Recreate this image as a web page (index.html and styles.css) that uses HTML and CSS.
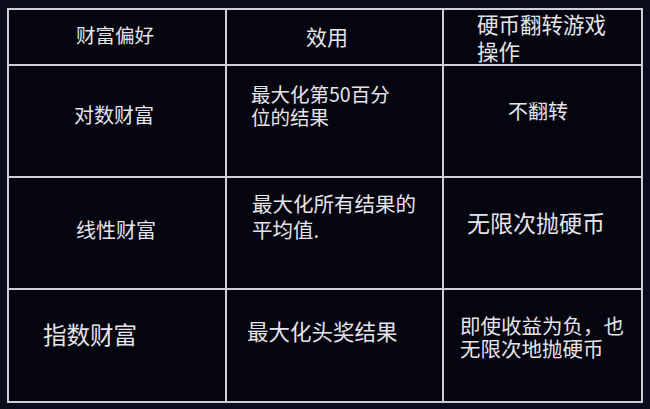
FILE: index.html
```html
<!DOCTYPE html>
<html lang="zh-CN">
<head>
<meta charset="utf-8">
<title>财富偏好</title>
<link rel="stylesheet" href="styles.css">
</head>
<body>
<div class="table">
  <div class="cell r1c1"><span class="ln">财富偏好</span></div>
  <div class="cell r1c2"><span class="ln">效用</span></div>
  <div class="cell r1c3"><span class="ln">硬币翻转游戏</span><span class="ln">操作</span></div>

  <div class="cell r2c1"><span class="ln">对数财富</span></div>
  <div class="cell r2c2"><span class="ln">最大化第50百分</span><span class="ln">位的结果</span></div>
  <div class="cell r2c3"><span class="ln">不翻转</span></div>

  <div class="cell r3c1"><span class="ln">线性财富</span></div>
  <div class="cell r3c2"><span class="ln">最大化所有结果的</span><span class="ln">平均值.</span></div>
  <div class="cell r3c3"><span class="ln">无限次抛硬币</span></div>

  <div class="cell r4c1"><span class="ln">指数财富</span></div>
  <div class="cell r4c2"><span class="ln">最大化头奖结果</span></div>
  <div class="cell r4c3"><span class="ln">即使收益为负，也</span><span class="ln">无限次地抛硬币</span></div>
</div>
</body>
</html>
```

FILE: styles.css
```css
html, body {
  margin: 0;
  padding: 0;
  background: #0b0d1d;
}
body {
  width: 650px;
  height: 409px;
  overflow: hidden;
  font-family: "Noto Sans CJK SC", "Noto Sans", sans-serif;
  color: #e4e4ea;
}
.table {
  box-sizing: border-box;
  margin: 8px 0 0 7px;
  width: 636px;
  display: grid;
  grid-template-columns: 218px 217px 199px;
  grid-template-rows: 56px 112px 112px 113px;
  border-top: 2px solid #cdced6;
  border-left: 2px solid #cdced6;
  background: #04050e;
}
.cell {
  box-sizing: border-box;
  border-right: 2px solid #cdced6;
  border-bottom: 2px solid #cdced6;
  white-space: nowrap;
  display: flex;
  flex-direction: column;
  align-items: flex-start;
}
.ln {
  display: block;
}
.r1c1 { font-size: 19.5px; line-height: 25px; padding: 12px 0 0 67px; }
.r1c2 { font-size: 21px; line-height: 27px; padding: 13px 0 0 79px; }
.r1c3 { font-size: 21.5px; line-height: 27px; padding: 0 0 0 33px; }

.r2c1 { font-size: 20px; line-height: 26px; padding: 36px 0 0 65px; }
.r2c2 { font-size: 19.5px; line-height: 23px; padding: 16px 0 0 24px; }
.r2c3 { font-size: 20px; line-height: 26px; padding: 32px 0 0 64px; }

.r3c1 { font-size: 20px; line-height: 26px; padding: 39px 0 0 67px; }
.r3c2 { font-size: 20.5px; line-height: 26px; padding: 12px 0 0 25px; }
.r3c3 { font-size: 23px; line-height: 30px; padding: 29px 0 0 23px; }

.r4c1 { font-size: 23.5px; line-height: 30px; padding: 29px 0 0 34px; }
.r4c2 { font-size: 21.5px; line-height: 28px; padding: 27px 0 0 20px; }
.r4c3 { font-size: 20.5px; line-height: 23px; padding: 24px 0 0 16px; }
```
